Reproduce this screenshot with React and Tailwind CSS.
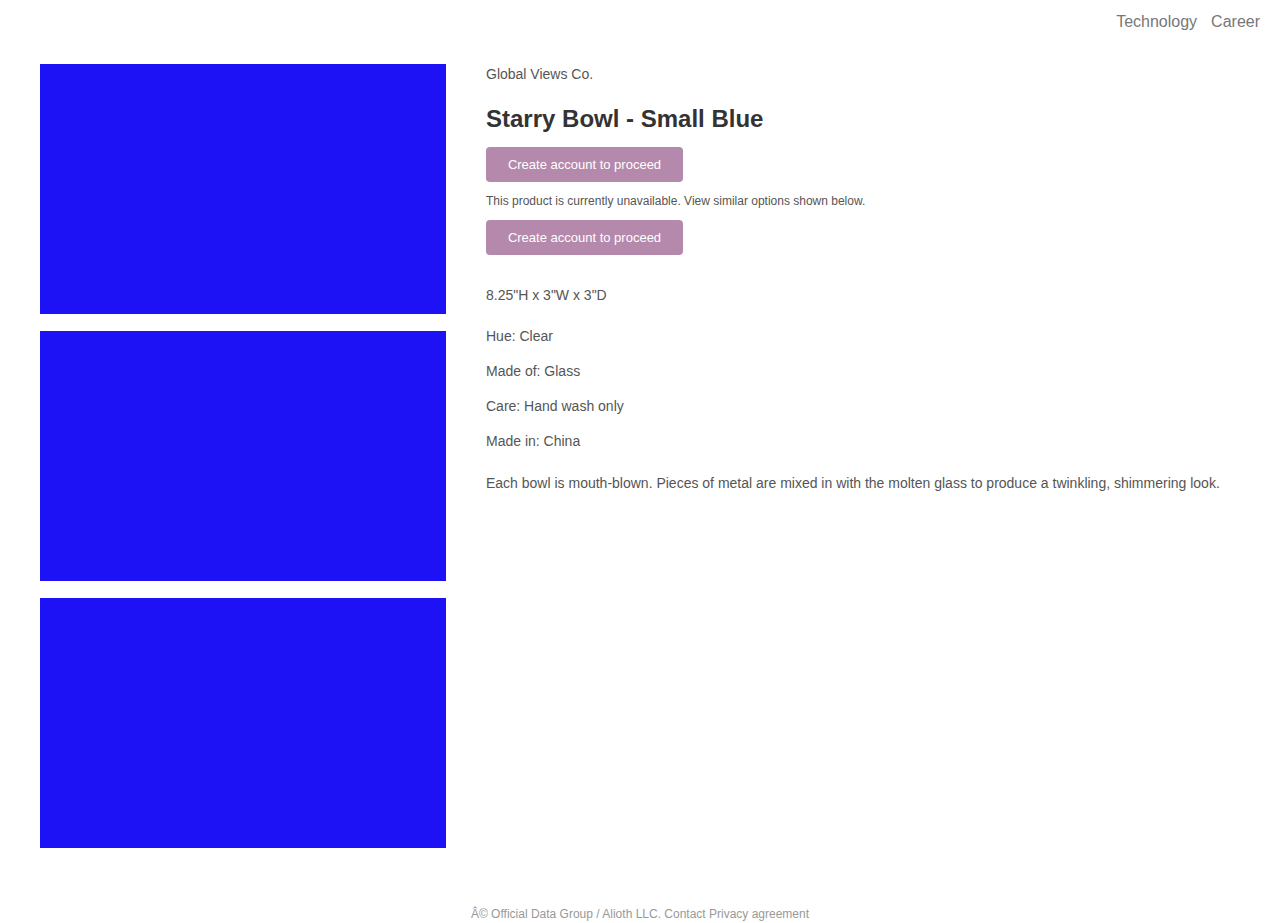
const details = ["Hue: Clear", "Made of: Glass", "Care: Hand wash only", "Made in: China"];

const ProductButton = () => (
    <button className="w-[197px] h-[35px] rounded-[4px] bg-[#b589ab] text-white text-[13px] leading-none">
        Create account to proceed
    </button>
);

const App = () => {
    return (
        <div className="min-h-[923px] bg-white font-['Liberation_Sans',Arial,sans-serif] flex flex-col">
            {/* Top nav */}
            <nav className="flex justify-end gap-[14px] pr-5 pt-[11px] h-[32px] text-[16px] leading-[22px] text-[#777]">
                <a href="#">Technology</a>
                <a href="#">Career</a>
            </nav>

            <main className="flex px-10 pt-8">
                {/* Gallery */}
                <div className="w-[406px] flex flex-col gap-[17px] shrink-0">
                    <div className="h-[250px] bg-[#1d12f5]" />
                    <div className="h-[250px] bg-[#1d12f5]" />
                    <div className="h-[250px] bg-[#1d12f5]" />
                </div>

                {/* Info */}
                <div className="ml-10 flex-1 text-[#555]">
                    <p className="text-[14px] leading-[18px] pt-[1px]">Global Views Co.</p>
                    <h1 className="mt-[22px] text-[24px] leading-[28px] font-bold text-[#333]">Starry Bowl - Small Blue</h1>
                    <div className="mt-[14px]">
                        <ProductButton />
                    </div>
                    <p className="mt-[12px] text-[12px] leading-[14px]">
                        This product is currently unavailable. View similar options shown below.
                    </p>
                    <div className="mt-[12px]">
                        <ProductButton />
                    </div>
                    <p className="mt-[31px] text-[14px] leading-[18px]">8.25"H x 3"W x 3"D</p>
                    <div className="mt-[23px] flex flex-col gap-[17px] text-[14px] leading-[18px]">
                        {details.map((d) => (
                            <p key={d}>{d}</p>
                        ))}
                    </div>
                    <p className="mt-[24px] text-[14px] leading-[18px]">
                        Each bowl is mouth-blown. Pieces of metal are mixed in with the molten glass to produce a twinkling, shimmering look.
                    </p>
                </div>
            </main>

            <footer className="mt-[59px] text-center text-[12px] leading-[14px] text-[#999]">
                Â© Official Data Group / Alioth LLC. Contact Privacy agreement
            </footer>
        </div>
    );
};

export default App;
